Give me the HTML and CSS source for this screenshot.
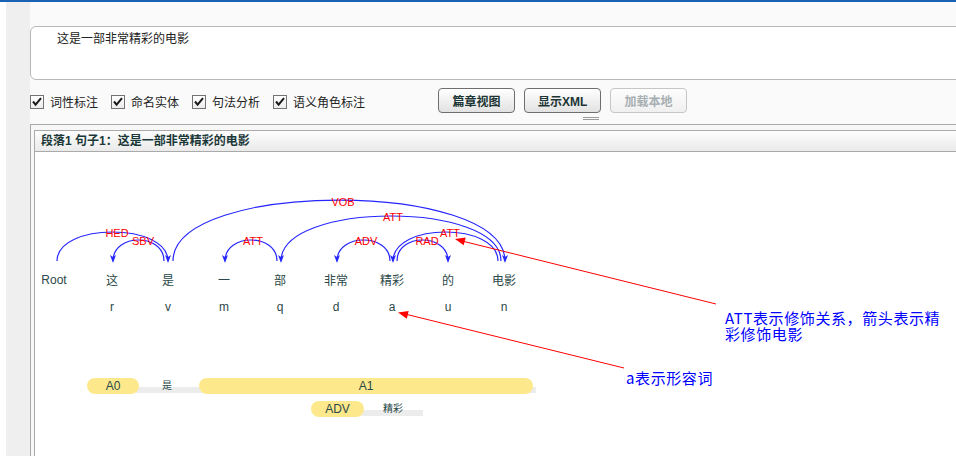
FILE: index.html
```html
<!DOCTYPE html>
<html lang="zh">
<head>
<meta charset="utf-8">
<title>语言分析</title>
<link rel="stylesheet" href="styles.css">
</head>
<body>
<div class="topbar"></div>
<div class="page">
  <div class="gutter"></div>
  <div class="content">
    <div class="input">这是一部非常精彩的电影</div>
    <div class="toolbar">
      <label class="opt"><span class="box"><svg width="12" height="12" viewBox="0 0 12 12"><path d="M2 5.5 L4.6 8.6 L10 2.2" fill="none" stroke="#1a1a1a" stroke-width="2"/></svg></span>词性标注</label>
      <label class="opt"><span class="box"><svg width="12" height="12" viewBox="0 0 12 12"><path d="M2 5.5 L4.6 8.6 L10 2.2" fill="none" stroke="#1a1a1a" stroke-width="2"/></svg></span>命名实体</label>
      <label class="opt"><span class="box"><svg width="12" height="12" viewBox="0 0 12 12"><path d="M2 5.5 L4.6 8.6 L10 2.2" fill="none" stroke="#1a1a1a" stroke-width="2"/></svg></span>句法分析</label>
      <label class="opt"><span class="box"><svg width="12" height="12" viewBox="0 0 12 12"><path d="M2 5.5 L4.6 8.6 L10 2.2" fill="none" stroke="#1a1a1a" stroke-width="2"/></svg></span>语义角色标注</label>
      <div class="buttons">
        <button class="btn">篇章视图</button>
        <button class="btn">显示XML</button>
        <button class="btn disabled" disabled>加载本地</button>
      </div>
    </div>
    <div class="splitter"><span class="grip"></span></div>
    <div class="outer">
      <div class="panel">
        <div class="panel-head">段落1 句子1：这是一部非常精彩的电影</div>
        <div class="panel-body">
          <svg class="graph" width="925" height="304" viewBox="35 152 925 304">
            <g class="arcs" fill="none" stroke="#2626ff" stroke-width="1.2">
              <path d="M57 261 C57 222.3 168 222.3 168 261"/>
              <path d="M164 261 C164 233 113 233 113 261"/>
              <path d="M173 261 C173 179.7 505 179.7 505 261"/>
              <path d="M277 261 C277 233 225 233 225 261"/>
              <path d="M501 261 C501 201 281 201 281 261"/>
              <path d="M390 261 C390 233 337 233 337 261"/>
              <path d="M397 261 C397 233 448 233 448 261"/>
              <path d="M498 261 C498 222.3 393 222.3 393 261"/>
            </g>
            <g class="heads" fill="#2626ff">
              <path d="M168 263 L165 255 L168 257 L171 255 Z"/>
              <path d="M113 263 L110 255 L113 257 L116 255 Z"/>
              <path d="M505 263 L502 255 L505 257 L508 255 Z"/>
              <path d="M225 263 L222 255 L225 257 L228 255 Z"/>
              <path d="M281 263 L278 255 L281 257 L284 255 Z"/>
              <path d="M337 263 L334 255 L337 257 L340 255 Z"/>
              <path d="M448 263 L445 255 L448 257 L451 255 Z"/>
              <path d="M393 263 L390 255 L393 257 L396 255 Z"/>
            </g>
            <g class="rel" text-anchor="middle">
              <text x="117" y="237">HED</text>
              <text x="143" y="245">SBV</text>
              <text x="343" y="206">VOB</text>
              <text x="253" y="245">ATT</text>
              <text x="393" y="221">ATT</text>
              <text x="366" y="245">ADV</text>
              <text x="427" y="245">RAD</text>
              <text x="450" y="237">ATT</text>
            </g>
            <g class="word" text-anchor="middle">
              <text x="54" y="284">Root</text>
              <text x="112" y="285">这</text>
              <text x="168" y="285">是</text>
              <text x="224" y="285">一</text>
              <text x="280" y="285">部</text>
              <text x="336" y="285">非常</text>
              <text x="392" y="285">精彩</text>
              <text x="448" y="285">的</text>
              <text x="504" y="285">电影</text>
            </g>
            <g class="pos" text-anchor="middle">
              <text x="112" y="311">r</text>
              <text x="168" y="311">v</text>
              <text x="224" y="311">m</text>
              <text x="280" y="311">q</text>
              <text x="336" y="311">d</text>
              <text x="392" y="311">a</text>
              <text x="448" y="311">u</text>
              <text x="504" y="311">n</text>
            </g>
            <g class="notes" stroke="#ff0000" stroke-width="1" fill="#ff0000">
              <line x1="716" y1="304" x2="462" y2="241"/>
              <path d="M455 239 L465.7 237.5 L463.7 245.3 Z" stroke="none"/>
              <line x1="624" y1="368" x2="405" y2="314"/>
              <path d="M398 312.5 L408.7 311 L406.8 318.8 Z" stroke="none"/>
            </g>
            <g class="srl">
              <rect x="136" y="387" width="400" height="6" fill="#ececec"/>
              <rect x="87" y="378" width="52" height="16" rx="8" fill="#fde98c"/>
              <rect x="199" y="378" width="334" height="16" rx="8" fill="#fde98c"/>
              <rect x="360" y="410" width="63" height="6" fill="#ececec"/>
              <rect x="311" y="401" width="53" height="16" rx="8" fill="#fde98c"/>
              <g class="srl-arg" text-anchor="middle">
                <text x="113" y="390">A0</text>
                <text x="366" y="390">A1</text>
                <text x="337.5" y="413">ADV</text>
              </g>
              <g class="srl-pred" text-anchor="middle">
                <text x="167" y="389">是</text>
                <text x="393" y="412">精彩</text>
              </g>
            </g>
          </svg>
          <div class="note note-att">ATT表示修饰关系，箭头表示精<br>彩修饰电影</div>
          <div class="note note-a">a表示形容词</div>
        </div>
      </div>
    </div>
  </div>
</div>
</body>
</html>
```

FILE: styles.css
```css
html, body {
  margin: 0;
  height: 100%;
  overflow: hidden;
}
body {
  background: #fff;
  font-family: "Liberation Sans", "Noto Sans CJK SC", sans-serif;
  font-size: 12px;
  color: #222;
}
.topbar {
  height: 2px;
  background: #1a62b6;
}
.page {
  display: flex;
  height: 454px;
}
.gutter {
  flex: none;
  width: 24px;
  margin-left: 6px;
  background: #efefef;
}
.content {
  flex: none;
  width: 960px;
  background: #fafafa;
  display: flex;
  flex-direction: column;
}
.input {
  box-sizing: border-box;
  margin-top: 24px;
  height: 54px;
  border: 1px solid #b8b8b8;
  border-radius: 6px;
  background: #fff;
  padding: 4px 0 0 26px;
  line-height: 14px;
  color: #222;
  font-family: "Noto Sans CJK SC", sans-serif;
}
.toolbar {
  display: flex;
  align-items: flex-start;
  margin-top: 8px;
  height: 25px;
}
.opt {
  display: flex;
  align-items: center;
  margin-top: 7px;
  margin-right: 13px;
  line-height: 14px;
  color: #222;
  font-family: "Noto Sans CJK SC", sans-serif;
}
.opt:last-of-type {
  margin-right: 0;
}
.box {
  box-sizing: border-box;
  width: 14px;
  height: 14px;
  border: 1px solid #737373;
  background: linear-gradient(#fff, #ececec);
  margin-right: 6px;
  display: flex;
  align-items: center;
  justify-content: center;
}
.buttons {
  display: flex;
  gap: 9px;
  margin-left: 73px;
}
.btn {
  box-sizing: border-box;
  width: 77px;
  height: 25px;
  border: 1px solid #6e6e6e;
  border-radius: 4px;
  background: linear-gradient(#ffffff, #e2e2e2);
  font-family: "Liberation Sans", "Noto Sans CJK SC", sans-serif;
  font-weight: bold;
  font-size: 12px;
  color: #1c3535;
  padding: 0;
}
.btn.disabled {
  border-color: #c6c6c6;
  color: #a8b0b3;
  background: linear-gradient(#fdfdfd, #f0f0f0);
}
.splitter {
  height: 11px;
}
.grip {
  display: block;
  width: 16px;
  height: 1px;
  margin-top: 4px;
  margin-left: 553px;
  border-top: 1px solid #9a9a9a;
  border-bottom: 1px solid #9a9a9a;
}
.outer {
  flex: 1;
  display: flex;
  flex-direction: column;
  border-top: 1px solid #aaa;
  border-left: 1px solid #aaa;
  padding: 5px 0 0 3px;
  background: #f7f7f7;
}
.panel {
  flex: 1;
  display: flex;
  flex-direction: column;
  border-top: 1px solid #aaa;
  border-left: 1px solid #aaa;
  background: #fff;
}
.panel-head {
  height: 20px;
  line-height: 20px;
  padding-left: 6px;
  border-bottom: 1px solid #aaa;
  background: linear-gradient(#fdfdfd, #eaeaea);
  font-weight: bold;
  color: #1b3838;
}
.panel-body {
  flex: 1;
  position: relative;
}
.graph {
  display: block;
}
.rel text {
  fill: #ff0000;
  font-family: "Liberation Sans", sans-serif;
  font-size: 11px;
}
.word text {
  fill: #2b4848;
  font-family: "Liberation Sans", "Noto Sans CJK SC", sans-serif;
  font-size: 12px;
}
.pos text {
  fill: #2b4848;
  font-family: "Liberation Sans", sans-serif;
  font-size: 12px;
}
.srl-arg text {
  fill: #2b4848;
  font-family: "Liberation Sans", sans-serif;
  font-size: 12px;
}
.srl-pred text {
  fill: #2b4848;
  font-family: "Noto Sans CJK SC", sans-serif;
  font-size: 10px;
}
.note {
  position: absolute;
  color: #0000ff;
  font-family: "Noto Sans CJK SC", sans-serif;
  font-size: 15px;
  letter-spacing: 0.6px;
  line-height: 16px;
  white-space: nowrap;
}
.note-att {
  left: 690px;
  top: 158px;
}
.note-a {
  left: 591px;
  top: 218px;
}
```
